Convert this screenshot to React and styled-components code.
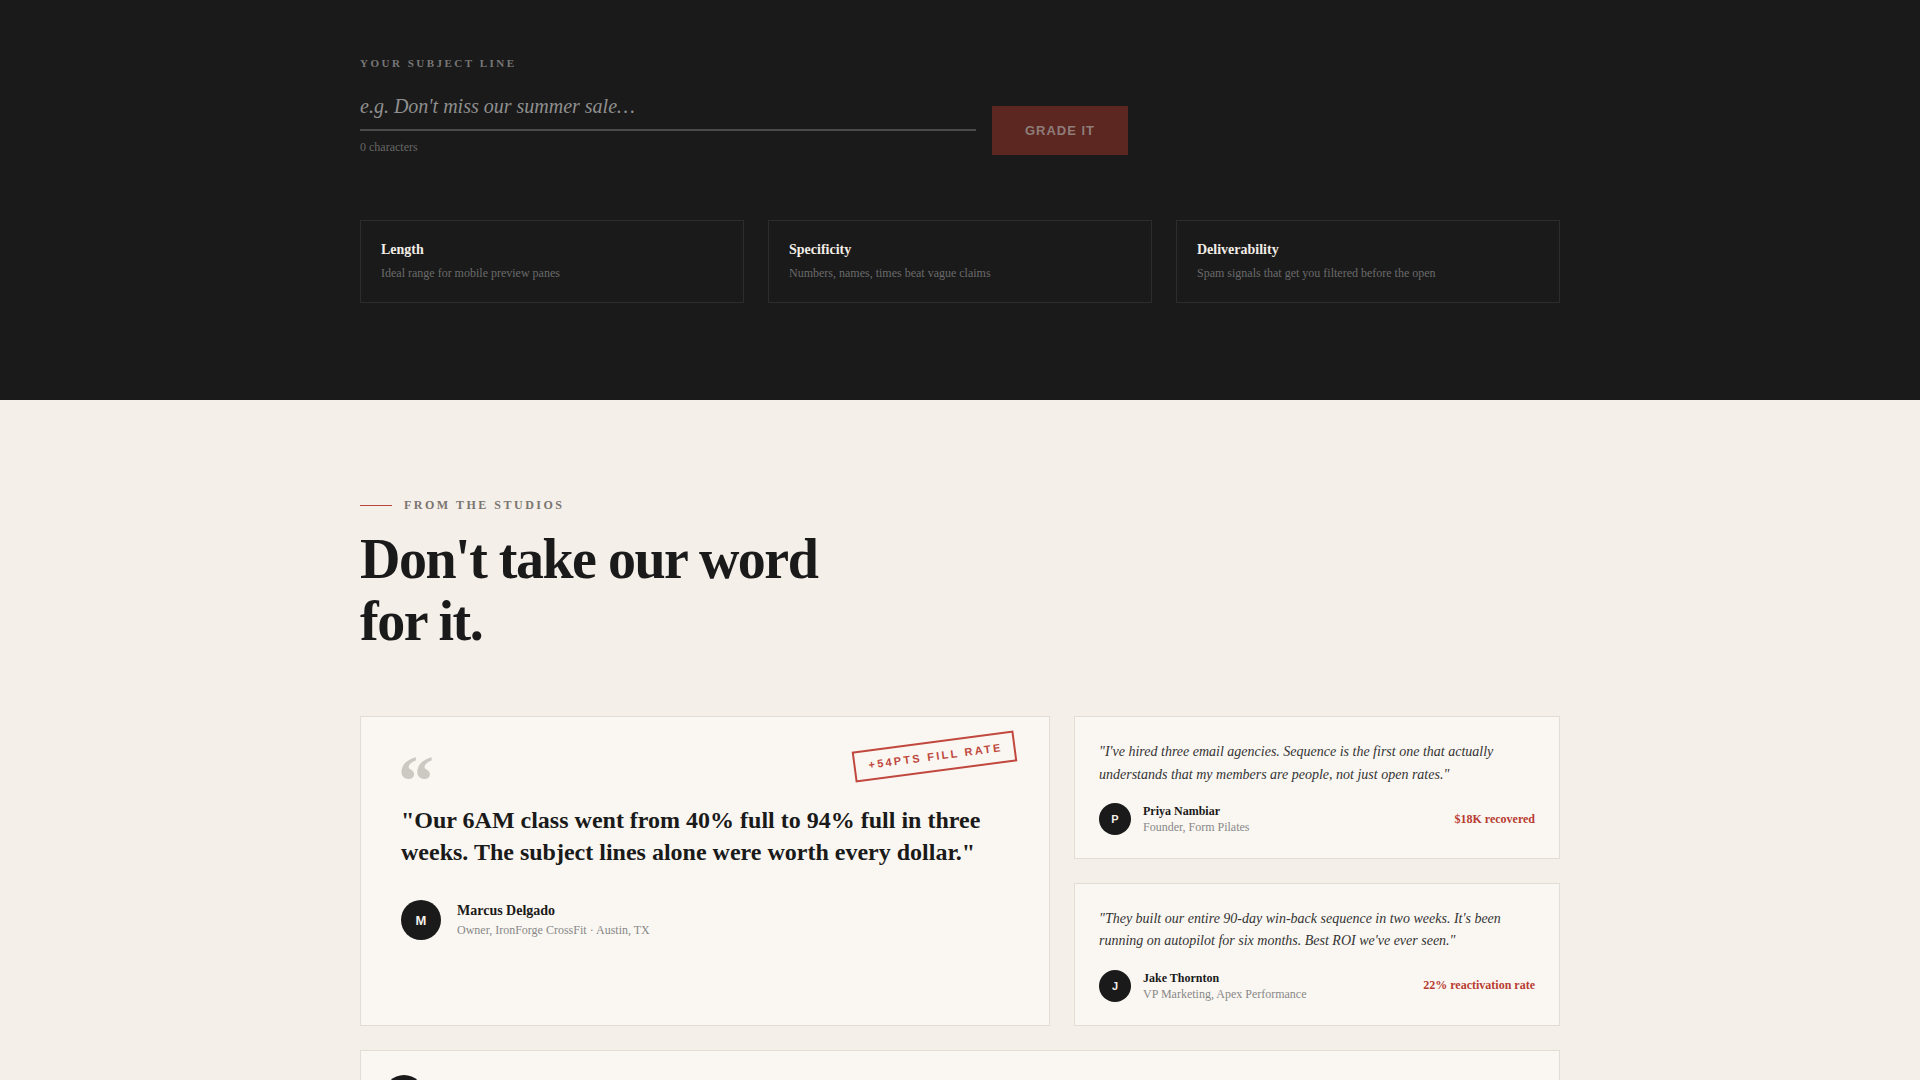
import React, { useState } from "react";
import styled, { createGlobalStyle } from "styled-components";

const GlobalStyle = createGlobalStyle`
  * { box-sizing: border-box; }
  body {
    margin: 0;
    background: #f4efe9;
    font-family: "Liberation Serif", "Times New Roman", serif;
    color: #1a1a1a;
  }
`;

const serif = `"Liberation Serif", "Times New Roman", serif`;
const sans = `"Liberation Sans", Arial, sans-serif`;

/* ---------- grader (dark band) ---------- */

const Grader = styled.section`
  background: #1a1a1a;
  padding: 56px 0 97px;
`;

const Container = styled.div`
  width: 1200px;
  margin: 0 auto;
`;

const FieldLabel = styled.label`
  display: block;
  font-family: ${serif};
  font-size: 11px;
  line-height: 14px;
  font-weight: 700;
  letter-spacing: 2.5px;
  text-transform: uppercase;
  color: #777777;
  margin-bottom: 12px;
`;

const InputRow = styled.div`
  display: flex;
  align-items: flex-end;
  gap: 16px;
`;

const InputColumn = styled.div`
  width: 616px;
`;

const SubjectInput = styled.input`
  display: block;
  width: 100%;
  background: transparent;
  border: none;
  border-bottom: 2px solid #4a4a4a;
  padding: 13px 0 11px;
  font-family: ${serif};
  font-style: italic;
  font-size: 20px;
  line-height: 23px;
  color: #e8e3dc;
  outline: none;

  &::placeholder {
    color: #8f8f8f;
  }
`;

const Counter = styled.div`
  margin-top: 8px;
  font-size: 12px;
  line-height: 16px;
  color: #666666;
`;

const GradeButton = styled.button`
  width: 136px;
  height: 49px;
  border: none;
  background: #5c2621;
  color: #8e7d79;
  font-family: ${sans};
  font-weight: 700;
  font-size: 13px;
  letter-spacing: 1px;
  text-transform: uppercase;
  cursor: not-allowed;
`;

const CriteriaGrid = styled.div`
  margin-top: 65px;
  display: grid;
  grid-template-columns: repeat(3, 1fr);
  gap: 24px;
`;

const CriterionCard = styled.div`
  border: 1px solid #2d2d2d;
  padding: 20px 19px 20px 20px;
`;

const CriterionTitle = styled.div`
  font-size: 14px;
  line-height: 18px;
  font-weight: 700;
  color: #f2ede6;
`;

const CriterionText = styled.div`
  margin-top: 6px;
  font-size: 12px;
  line-height: 17px;
  color: #6a6a6a;
`;

/* ---------- testimonials (light band) ---------- */

const Testimonials = styled.section`
  padding: 97px 0 120px;
`;

const Eyebrow = styled.div`
  display: flex;
  align-items: center;
  gap: 12px;
`;

const EyebrowRule = styled.span`
  width: 32px;
  height: 1px;
  background: #b9453b;
`;

const EyebrowText = styled.span`
  font-size: 12px;
  line-height: 16px;
  font-weight: 700;
  letter-spacing: 2.5px;
  text-transform: uppercase;
  color: #7a7570;
`;

const Heading = styled.h2`
  margin: 16px 0 0;
  max-width: 520px;
  font-size: 56px;
  line-height: 1.1;
  font-weight: 700;
  letter-spacing: -1.5px;
  color: #1a1a1a;
`;

const QuoteGrid = styled.div`
  margin-top: 64px;
  display: grid;
  grid-template-columns: 690px 1fr;
  gap: 24px;
`;

const Card = styled.article`
  position: relative;
  background: #faf7f2;
  border: 1px solid #e2ddd5;
  padding: ${(p) => p.$pad};
`;

const WideCard = styled(Card)`
  grid-column: 1 / -1;
  display: flex;
  align-items: flex-start;
  gap: 16px;
`;

const SideColumn = styled.div`
  display: flex;
  flex-direction: column;
  gap: 24px;
`;

const QuoteMark = styled.div`
  margin: 1px 0 0 -3px;
  height: 46px;
  font-size: 72px;
  line-height: 46px;
  font-weight: 700;
  color: #ccc8c2;
`;

const Stamp = styled.div`
  position: absolute;
  top: 24px;
  right: 33px;
  transform: rotate(-7.5deg);
  border: 2px solid #c0483e;
  padding: 7px 11px 7px 13px;
  font-family: ${sans};
  font-size: 11px;
  line-height: 13px;
  font-weight: 700;
  letter-spacing: 2.3px;
  color: #c0483e;
  text-transform: uppercase;
`;

const LeadQuote = styled.p`
  margin: 0 0 32px;
  font-size: 24px;
  line-height: 32px;
  font-weight: 700;
  color: #1a1a1a;
`;

const SideQuote = styled.p`
  margin: 0 0 17px;
  font-size: 14px;
  line-height: 22.4px;
  font-style: italic;
  color: #333333;
`;

const Author = styled.div`
  display: flex;
  align-items: center;
  gap: ${(p) => (p.$large ? "16px" : "12px")};
`;

const Avatar = styled.div`
  flex: none;
  width: ${(p) => (p.$large ? "40px" : "32px")};
  height: ${(p) => (p.$large ? "40px" : "32px")};
  border-radius: 50%;
  background: #1a1a1a;
  color: #f4efe9;
  display: flex;
  align-items: center;
  justify-content: center;
  font-family: ${sans};
  font-weight: 700;
  font-size: ${(p) => (p.$large ? "13px" : "11px")};
`;

const AuthorText = styled.div`
  display: flex;
  flex-direction: column;
`;

const AuthorName = styled.div`
  font-size: ${(p) => (p.$large ? "14px" : "12px")};
  line-height: ${(p) => (p.$large ? "18px" : "16px")};
  font-weight: 700;
  color: #1a1a1a;
`;

const AuthorRole = styled.div`
  margin-top: ${(p) => (p.$large ? "2px" : "0")};
  font-size: 12px;
  line-height: ${(p) => (p.$large ? "17px" : "16px")};
  color: #888888;
`;

const Metric = styled.div`
  margin-left: auto;
  font-size: 12px;
  font-weight: 700;
  color: #b83c32;
`;

const WideBody = styled.div`
  padding-top: 12px;
  display: flex;
  flex-direction: column;
  gap: 14px;
`;

const WideQuote = styled.p`
  margin: 0;
  font-size: 16px;
  line-height: 24px;
  font-style: italic;
  color: #333333;
`;

const criteria = [
  { title: "Length", text: "Ideal range for mobile preview panes" },
  { title: "Specificity", text: "Numbers, names, times beat vague claims" },
  { title: "Deliverability", text: "Spam signals that get you filtered before the open" },
];

const sideQuotes = [
  {
    quote:
      "\"I've hired three email agencies. Sequence is the first one that actually understands that my members are people, not just open rates.\"",
    initial: "P",
    name: "Priya Nambiar",
    role: "Founder, Form Pilates",
    metric: "$18K recovered",
  },
  {
    quote:
      "\"They built our entire 90-day win-back sequence in two weeks. It's been running on autopilot for six months. Best ROI we've ever seen.\"",
    initial: "J",
    name: "Jake Thornton",
    role: "VP Marketing, Apex Performance",
    metric: "22% reactivation rate",
  },
];

export default function App() {
  const [subject, setSubject] = useState("");

  return (
    <>
      <GlobalStyle />
      <Grader>
        <Container>
          <FieldLabel htmlFor="subject">Your subject line</FieldLabel>
          <InputRow>
            <InputColumn>
              <SubjectInput
                id="subject"
                value={subject}
                onChange={(e) => setSubject(e.target.value)}
                placeholder="e.g. Don't miss our summer sale…"
              />
              <Counter>{subject.length} characters</Counter>
            </InputColumn>
            <GradeButton disabled={!subject}>Grade it</GradeButton>
          </InputRow>

          <CriteriaGrid>
            {criteria.map((c) => (
              <CriterionCard key={c.title}>
                <CriterionTitle>{c.title}</CriterionTitle>
                <CriterionText>{c.text}</CriterionText>
              </CriterionCard>
            ))}
          </CriteriaGrid>
        </Container>
      </Grader>

      <Testimonials>
        <Container>
          <Eyebrow>
            <EyebrowRule />
            <EyebrowText>From the studios</EyebrowText>
          </Eyebrow>
          <Heading>Don't take our word for it.</Heading>

          <QuoteGrid>
            <Card $pad="40px">
              <Stamp>+54pts fill rate</Stamp>
              <QuoteMark>“</QuoteMark>
              <LeadQuote>
                "Our 6AM class went from 40% full to 94% full in three weeks. The subject
                lines alone were worth every dollar."
              </LeadQuote>
              <Author $large>
                <Avatar $large>M</Avatar>
                <AuthorText>
                  <AuthorName $large>Marcus Delgado</AuthorName>
                  <AuthorRole $large>Owner, IronForge CrossFit · Austin, TX</AuthorRole>
                </AuthorText>
              </Author>
            </Card>

            <SideColumn>
              {sideQuotes.map((q) => (
                <Card key={q.name} $pad="24px 24px 23px">
                  <SideQuote>{q.quote}</SideQuote>
                  <Author>
                    <Avatar>{q.initial}</Avatar>
                    <AuthorText>
                      <AuthorName>{q.name}</AuthorName>
                      <AuthorRole>{q.role}</AuthorRole>
                    </AuthorText>
                    <Metric>{q.metric}</Metric>
                  </Author>
                </Card>
              ))}
            </SideColumn>

            <WideCard $pad="24px 23px">
              <Avatar $large>S</Avatar>
              <WideBody>
                <WideQuote>
                  "Our lapsed-member list went from dead weight to our best month of renewals."
                </WideQuote>
                <AuthorText>
                  <AuthorName $large>Sofia Reyes</AuthorName>
                  <AuthorRole $large>Owner, Tidewater Yoga · San Diego, CA</AuthorRole>
                </AuthorText>
              </WideBody>
            </WideCard>
          </QuoteGrid>
        </Container>
      </Testimonials>
    </>
  );
}
